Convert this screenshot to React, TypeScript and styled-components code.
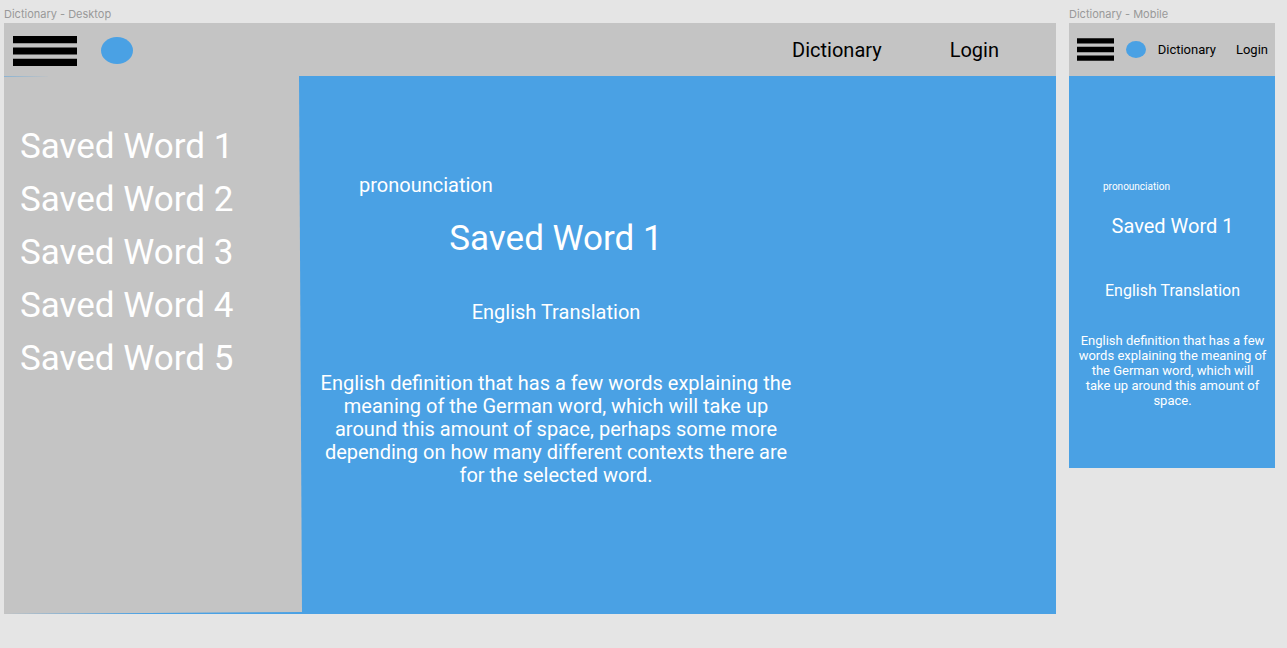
import React from "react";
import styled, { createGlobalStyle, css } from "styled-components";

const color = {
  canvas: "#e5e5e5",
  panel: "#c4c4c4",
  accent: "#4aa1e4",
  label: "#999999",
};

const GlobalStyle = createGlobalStyle`
  *, *::before, *::after { box-sizing: border-box; }
  body {
    margin: 0;
    background: ${color.canvas};
    font-family: Roboto, "Liberation Sans", sans-serif;
  }
  h1, h2, p, ul { margin: 0; padding: 0; font-weight: 400; }
  a { color: inherit; text-decoration: none; }
`;

type Sized = { $compact?: boolean };

const Board = styled.div`
  display: flex;
  align-items: flex-start;
  gap: 13px;
  padding: 6px 12px 32px 4px;
`;

const Artboard = styled.section<Sized>`
  flex: ${(p) => (p.$compact ? "0 0 206px" : "1 1 0")};
  min-width: 0;
`;

const ArtboardLabel = styled.h2`
  height: 17px;
  color: ${color.label};
  font: 400 11px/17px Inter, sans-serif;
`;

const Screen = styled.div`
  background: ${color.accent};
`;

const Header = styled.header<Sized>`
  display: flex;
  align-items: center;
  height: 53px;
  background: ${color.panel};
  padding: ${(p) => (p.$compact ? "0 7px 0 8px" : "2px 57px 0 9px")};
`;

const MenuButton = styled.button<Sized>`
  flex: none;
  padding: 0;
  border: 0;
  background: none;
  cursor: pointer;
  margin-right: ${(p) => (p.$compact ? "12px" : "24px")};

  svg {
    display: block;
    width: ${(p) => (p.$compact ? "37px" : "64px")};
    height: ${(p) => (p.$compact ? "23px" : "30px")};
  }
`;

const Logo = styled.span<Sized>`
  flex: none;
  width: ${(p) => (p.$compact ? "20px" : "32px")};
  height: ${(p) => (p.$compact ? "17px" : "27px")};
  border-radius: 50%;
  background: ${color.accent};
`;

const Nav = styled.nav<Sized>`
  display: flex;
  margin-left: auto;
  color: #000;
  ${(p) =>
    p.$compact
      ? css`
          gap: 20px;
          font-size: 13px;
          line-height: 15px;
        `
      : css`
          gap: 68px;
          font-size: 20px;
          line-height: 23px;
        `}
`;

const Body = styled.div`
  display: flex;
`;

/* The drawer's edges run slightly off square. */
const Sidebar = styled.aside`
  flex: 0 0 298px;
  padding: 44px 16px;
  background: ${color.panel};
  clip-path: polygon(-48px 1px, 48px 0, 295px 0, 100% calc(100% - 2px), 0 100%);
`;

const WordList = styled.ul`
  list-style: none;
  color: #fff;
  font-size: 35px;
  line-height: 53px;
`;

const Entry = styled.main<Sized>`
  display: flex;
  flex-direction: column;
  align-items: center;
  color: #fff;
  text-align: center;
  ${(p) =>
    p.$compact
      ? css`
          padding: 105px 8px 60px 9px;
        `
      : css`
          flex: 0 1 491px;
          padding: 98px 0 127px 17px;
        `}
`;

const Pronunciation = styled.p<Sized>`
  align-self: flex-start;
  ${(p) =>
    p.$compact
      ? css`
          padding-left: 25px;
          margin-bottom: 22px;
          font-size: 10px;
          line-height: 12px;
        `
      : css`
          padding-left: 40px;
          margin-bottom: 21px;
          font-size: 20px;
          line-height: 23px;
        `}
`;

const Word = styled.h1<Sized>`
  ${(p) =>
    p.$compact
      ? css`
          margin-bottom: 43px;
          font-size: 20px;
          line-height: 23px;
        `
      : css`
          margin-bottom: 41px;
          font-size: 35px;
          line-height: 42px;
        `}
`;

const Translation = styled.p<Sized>`
  ${(p) =>
    p.$compact
      ? css`
          margin-bottom: 33px;
          font-size: 16px;
          line-height: 19px;
        `
      : css`
          margin-bottom: 48px;
          font-size: 20px;
          line-height: 23px;
        `}
`;

const Definition = styled.p<Sized>`
  font-size: ${(p) => (p.$compact ? "13px" : "20px")};
  line-height: ${(p) => (p.$compact ? "15px" : "23px")};
`;

function MenuIcon({ compact }: { compact?: boolean }) {
  return compact ? (
    <svg viewBox="0 0 37 23" aria-hidden="true">
      <path d="M0 .2h37v5.4H0zM0 8.8h37v5.4H0zM0 17.4h37v5.4H0z" />
    </svg>
  ) : (
    <svg viewBox="0 0 64 30" aria-hidden="true">
      <path d="M0 0h64v7.2H0zM0 11.4h64v7.2H0zM0 22.8h64V30H0z" />
    </svg>
  );
}

function TopBar({ compact }: { compact?: boolean }) {
  return (
    <Header $compact={compact}>
      <MenuButton type="button" aria-label="Menu" $compact={compact}>
        <MenuIcon compact={compact} />
      </MenuButton>
      <Logo $compact={compact} />
      <Nav $compact={compact}>
        <a href="#dictionary">Dictionary</a>
        <a href="#login">Login</a>
      </Nav>
    </Header>
  );
}

function WordEntry({ compact, definition }: { compact?: boolean; definition: string }) {
  return (
    <Entry as={compact ? "div" : "main"} $compact={compact}>
      <Pronunciation $compact={compact}>pronounciation</Pronunciation>
      <Word $compact={compact}>Saved Word 1</Word>
      <Translation $compact={compact}>English Translation</Translation>
      <Definition $compact={compact}>{definition}</Definition>
    </Entry>
  );
}

const savedWords = ["Saved Word 1", "Saved Word 2", "Saved Word 3", "Saved Word 4", "Saved Word 5"];

export default function App() {
  return (
    <>
      <GlobalStyle />
      <Board>
        <Artboard>
          <ArtboardLabel>Dictionary - Desktop</ArtboardLabel>
          <Screen>
            <TopBar />
            <Body>
              <Sidebar>
                <WordList>
                  {savedWords.map((word) => (
                    <li key={word}>
                      <a href="#word">{word}</a>
                    </li>
                  ))}
                </WordList>
              </Sidebar>
              <WordEntry definition="English definition that has a few words explaining the meaning of the German word, which will take up around this amount of space, perhaps some more depending on how many different contexts there are for the selected word." />
            </Body>
          </Screen>
        </Artboard>
        <Artboard $compact>
          <ArtboardLabel>Dictionary - Mobile</ArtboardLabel>
          <Screen>
            <TopBar compact />
            <WordEntry
              compact
              definition="English definition that has a few words explaining the meaning of the German word, which will take up around this amount of space."
            />
          </Screen>
        </Artboard>
      </Board>
    </>
  );
}
